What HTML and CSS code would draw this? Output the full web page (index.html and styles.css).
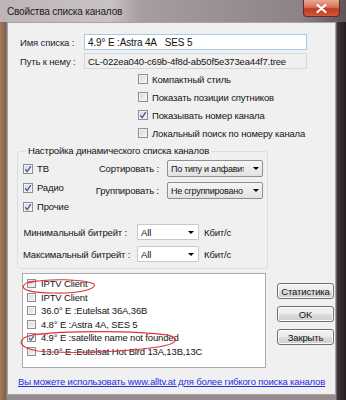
FILE: index.html
```html
<!DOCTYPE html>
<html lang="ru">
<head>
  <meta charset="UTF-8">
  <title>Свойства списка каналов</title>
  <link rel="stylesheet" href="styles.css">
</head>
<body>

  <div class="window">
    <div class="titlebar">
      <span class="title">Свойства списка каналов</span>
      <span class="close">
        <svg width="11" height="9" viewBox="0 0 11 9"><path d="M1.5 1 L9.5 8 M9.5 1 L1.5 8" stroke="#fff" stroke-width="2.2" stroke-linecap="round"/></svg>
      </span>
    </div>

    <div class="middle">
      <div class="client">

        <div class="field-row">
          <span class="field-label">Имя списка :</span>
          <div class="textbox active">4.9° E :Astra 4A&nbsp;&nbsp; SES 5</div>
        </div>
        <div class="field-row second">
          <span class="field-label">Путь к нему :</span>
          <div class="textbox readonly">CL-022ea040-c69b-4f8d-ab50f5e373ea44f7.tree</div>
        </div>

        <div class="options">
          <div class="check"><span class="cb"></span>Компактный стиль</div>
          <div class="check"><span class="cb"></span>Показать позиции спутников</div>
          <div class="check"><span class="cb"><svg viewBox="0 0 8 8"><path d="M1.2 4.2 L3.2 6.6 L6.8 1.2" stroke="#4a5c98" stroke-width="1.4" fill="none"/></svg></span>Показывать номер канала</div>
          <div class="check"><span class="cb"></span>Локальный поиск по номеру канала</div>
        </div>

        <fieldset class="group">
          <legend>Настройка динамического списка каналов</legend>
          <div class="group-top">
            <div class="types">
              <div class="check"><span class="cb"><svg viewBox="0 0 8 8"><path d="M1.2 4.2 L3.2 6.6 L6.8 1.2" stroke="#4a5c98" stroke-width="1.4" fill="none"/></svg></span>ТВ</div>
              <div class="check"><span class="cb"><svg viewBox="0 0 8 8"><path d="M1.2 4.2 L3.2 6.6 L6.8 1.2" stroke="#4a5c98" stroke-width="1.4" fill="none"/></svg></span>Радио</div>
              <div class="check"><span class="cb"><svg viewBox="0 0 8 8"><path d="M1.2 4.2 L3.2 6.6 L6.8 1.2" stroke="#4a5c98" stroke-width="1.4" fill="none"/></svg></span>Прочие</div>
            </div>
            <div class="sorting">
              <div class="sort-row">
                <span>Сортировать :</span>
                <div class="combo"><span class="combo-text">По типу и алфавиту</span><span class="arrow"></span></div>
              </div>
              <div class="sort-row second">
                <span>Группировать :</span>
                <div class="combo"><span class="combo-text">Не сгруппировано</span><span class="arrow"></span></div>
              </div>
            </div>
          </div>

          <div class="bitrate">
            <div class="rate-row">
              <span class="rate-label">Минимальный битрейт :</span>
              <div class="combo edit"><span class="combo-text">All</span><span class="arrow"></span></div>
              <span class="unit">Кбит/с</span>
            </div>
            <div class="rate-row second">
              <span class="rate-label">Максимальный битрейт :</span>
              <div class="combo edit"><span class="combo-text">All</span><span class="arrow"></span></div>
              <span class="unit">Кбит/с</span>
            </div>
          </div>
        </fieldset>

        <div class="bottom">
          <div class="list">
            <div class="item"><span class="cb small"></span>IPTV Client</div>
            <div class="item"><span class="cb small"></span>IPTV Client</div>
            <div class="item"><span class="cb small"></span>36.0° E :Eutelsat 36A,36B</div>
            <div class="item"><span class="cb small"></span>4.8° E :Astra 4A, SES 5</div>
            <div class="item"><span class="cb small"><svg viewBox="0 0 8 8"><path d="M1.2 4.2 L3.2 6.6 L6.8 1.2" stroke="#4a5c98" stroke-width="1.4" fill="none"/></svg></span>4.9° E :satellite name not founded</div>
            <div class="item"><span class="cb small"></span>13.0° E :Eutelsat Hot Bird 13A,13B,13C</div>
          </div>
          <div class="buttons">
            <div class="btn">Статистика</div>
            <div class="btn">OK</div>
            <div class="btn">Закрыть</div>
          </div>
        </div>

        <a class="link" href="#">Вы можете использовать www.alltv.at для более гибкого поиска каналов</a>

        <!-- red marks drawn over the list -->
        <svg class="marks" width="329" height="373" viewBox="0 0 329 373">
          <path d="M20 260 C 40 255, 75 256, 86 261 C 90 266, 70 271, 45 270 C 25 270, 12 267, 16 262 C 18 259, 24 258, 30 258" stroke="#e2333f" stroke-width="1.1" fill="none"/>
          <path d="M24 312 C 60 307, 130 308, 160 312 C 172 315, 170 321, 150 324 C 115 329, 60 331, 30 328 C 12 325, 9 318, 18 314 C 22 312, 30 311, 40 311" stroke="#e2333f" stroke-width="1.1" fill="none"/>
        </svg>
      </div>
    </div>
  </div>

</body>
</html>
```

FILE: styles.css
```css
* {
  box-sizing: border-box;
}

body {
  margin: 0;
  background: #2e2729;
  font-family: 'Liberation Sans', Arial, sans-serif;
  font-size: 9.5px;
  letter-spacing: -0.15px;
  color: #141414;
}

.window {
  width: 346px;
  height: 400px;
  display: flex;
  flex-direction: column;
  background: linear-gradient(to right, #a87a52 0, #7c6050 6px, #978d90 7px, #978d90 336px, #3e3539 337px, #241e21 346px);
}

.titlebar {
  height: 22px;
  position: relative;
  display: flex;
  align-items: center;
  padding-left: 7px;
  background: linear-gradient(to right, #bdb4b7 0, #c9c2c4 110px, #a89ea2 140px, #8d8387 300px, #5e5458 346px);
}

.title {
  font-size: 10px;
  color: #1d1a1c;
  padding-top: 1px;
}

.close {
  position: absolute;
  top: 0;
  right: 6px;
  width: 37px;
  height: 17px;
  display: flex;
  align-items: center;
  justify-content: center;
  border: 1px solid #5e2e28;
  border-top: none;
  border-radius: 0 0 4px 4px;
  background: linear-gradient(#e9a996 0, #d97058 45%, #c43a20 55%, #d0583a 100%);
}

.middle {
  display: flex;
  padding-left: 7px;
}

.client {
  position: relative;
  width: 329px;
  height: 373px;
  background: #f0f0f0;
  border: 1px solid #a9a3a6;
  padding: 11px 0 0 12px;
}

.field-row {
  display: flex;
  align-items: center;
  height: 16px;
}

.field-row.second {
  margin-top: 3px;
}

.field-label {
  width: 64px;
  color: #2a2030;
}

.textbox {
  width: 223px;
  height: 16px;
  padding: 1px 3px;
  line-height: 13px;
  white-space: nowrap;
  overflow: hidden;
  background: #fff;
  border: 1px solid #abadb3;
}

.textbox.active {
  border-color: #a8c8e4;
  font-size: 10px;
}

.textbox.readonly {
  background: #f0f0f0;
  border-color: #d7d7d7;
}

.options {
  padding: 1px 0 0 118px;
}

.check {
  display: flex;
  align-items: center;
  height: 18px;
  white-space: nowrap;
}

.cb {
  width: 10px;
  height: 10px;
  flex: none;
  margin-right: 4px;
  display: flex;
  align-items: center;
  justify-content: center;
  border: 1px solid #8e8f8f;
  background: linear-gradient(135deg, #d6d6d6, #f8f8f8);
  box-shadow: inset 0 0 0 1px #f2f2f2;
}

.cb svg {
  width: 8px;
  height: 8px;
}

.cb.small {
  width: 9px;
  height: 9px;
  margin-right: 5px;
}

.group {
  margin: 3px 0 0 -3px;
  width: 251px;
  padding: 0 4px 6px 5px;
  border: 1px solid #d5dfe5;
  border-radius: 3px;
}

.group legend {
  padding: 0 2px;
  margin-left: 3px;
  line-height: 12px;
}

.group-top {
  display: flex;
  justify-content: space-between;
}

.types {
  padding-top: 2px;
}

.types .check {
  height: 19px;
}

.sorting {
  padding-top: 3px;
}

.sort-row {
  display: flex;
  align-items: center;
  justify-content: flex-end;
}

.sort-row span:first-child {
  margin-right: 8px;
}

.sort-row.second {
  margin-top: 5px;
}

.combo {
  width: 96px;
  height: 17px;
  display: flex;
  align-items: center;
  padding: 0 3px 0 3px;
  border: 1px solid #8e8f8f;
  border-radius: 2px;
  background: linear-gradient(#f6f6f6, #e2e2e2);
  overflow: hidden;
  font-size: 9px;
  letter-spacing: -0.25px;
}

.combo-text {
  flex: 1;
  white-space: nowrap;
  overflow: hidden;
}

.arrow {
  flex: none;
  width: 0;
  height: 0;
  margin-left: 1px;
  border-left: 3px solid transparent;
  border-right: 3px solid transparent;
  border-top: 3px solid #000;
}

.combo.edit {
  width: 62px;
  height: 16px;
  padding-right: 4px;
  border-color: #c5c8cc;
  border-radius: 1px;
  background: #fff;
  font-size: 9.5px;
  letter-spacing: -0.15px;
}

.bitrate {
  margin-top: 8px;
}

.rate-row {
  display: flex;
  align-items: center;
}

.rate-row.second {
  margin-top: 6px;
}

.rate-label {
  width: 104px;
  text-align: right;
  white-space: nowrap;
  margin-right: 10px;
}

.unit {
  margin-left: 5px;
}

.bottom {
  display: flex;
  margin: 4px 0 0 2px;
}

.list {
  width: 244px;
  height: 95px;
  padding: 3px 0 0 4px;
  background: #fff;
  border: 1px solid #a9abb0;
}

.item {
  display: flex;
  align-items: center;
  height: 13.5px;
  white-space: nowrap;
}

.buttons {
  display: flex;
  flex-direction: column;
  gap: 7px;
  margin-left: 11px;
  padding-top: 10px;
}

.btn {
  width: 57px;
  height: 16px;
  display: flex;
  align-items: center;
  justify-content: center;
  border: 1px solid #707070;
  border-radius: 3px;
  background: linear-gradient(#f2f2f2 0, #ebebeb 50%, #dddddd 50%, #cfcfcf 100%);
  box-shadow: inset 0 0 0 1px #fbfbfb;
}

.link {
  display: block;
  margin: 8px 0 0 -2px;
  line-height: 12px;
  color: #2b2be0;
  white-space: nowrap;
}

.marks {
  position: absolute;
  left: 0;
  top: 0;
  pointer-events: none;
}
```
